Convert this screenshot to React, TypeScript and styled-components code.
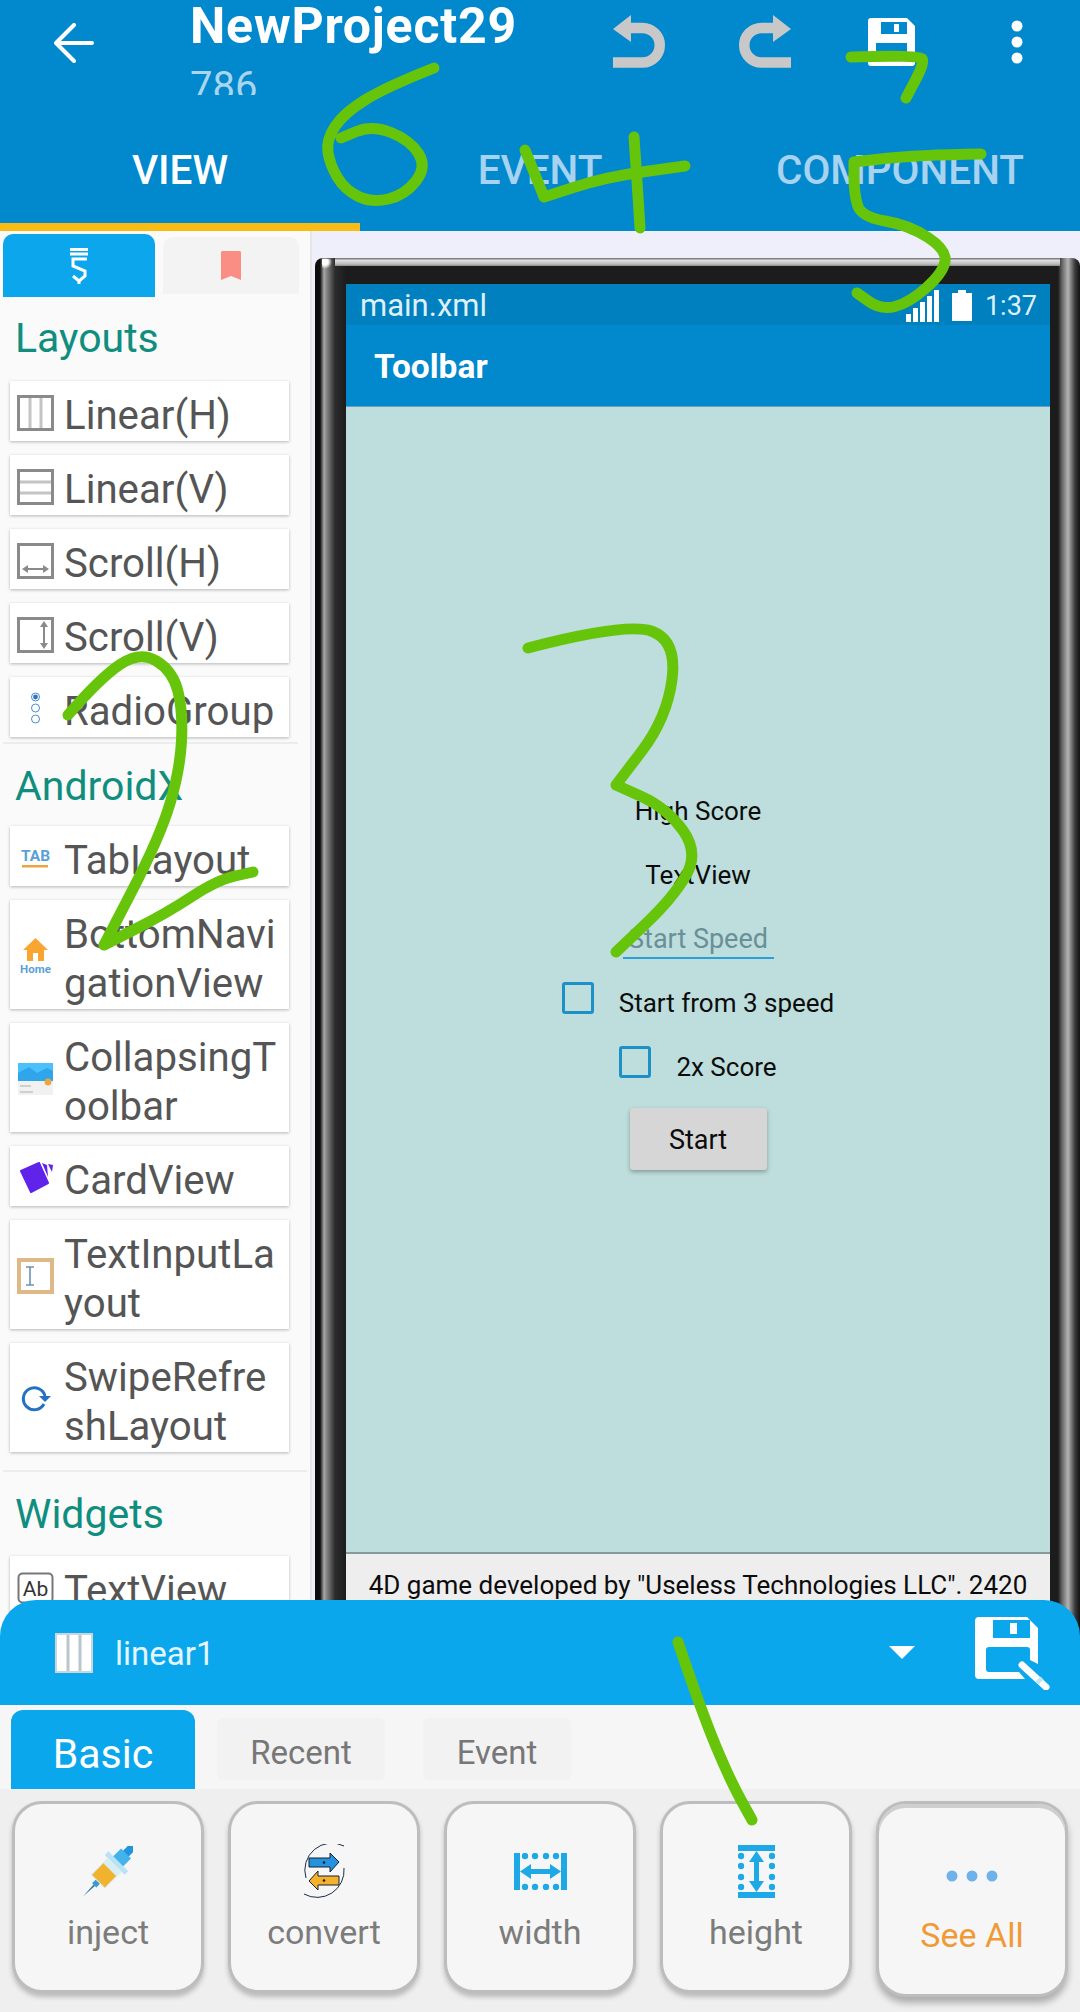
import styled, { createGlobalStyle } from "styled-components";

const GlobalStyle = createGlobalStyle`
    html, body {
        margin: 0;
        padding: 0;
        background: #fafafa;
    }
    * {
        box-sizing: border-box;
    }
`;

const App_ = styled.div`
    position: relative;
    width: 1080px;
    height: 2012px;
    overflow: hidden;
    display: flex;
    flex-direction: column;
    font-family: Roboto, "Liberation Sans", sans-serif;
`;

/* top bar */
const Header = styled.header`
    height: 231px;
    flex: none;
    background: #0288cc;
`;
const HeaderTop = styled.div`
    height: 95px;
    display: flex;
    align-items: flex-start;
`;
const BackSlot = styled.div`
    width: 190px;
    height: 86px;
    flex: none;
    display: flex;
    align-items: center;
    padding-left: 54px;
`;
const TitleBlock = styled.div`
    flex: 1;
`;
const ProjectName = styled.div`
    font-size: 50px;
    font-weight: 700;
    letter-spacing: 0.8px;
    line-height: 52px;
    color: #fff;
`;
const ProjectId = styled.div`
    height: 43px;
    overflow: hidden;
    font-size: 40px;
    line-height: 70px;
    color: #a9d5ef;
`;
const Actions = styled.div`
    width: 504px;
    flex: none;
    display: grid;
    grid-template-columns: repeat(4, 1fr);
`;
const ActionSlot = styled.div`
    height: 83px;
    display: flex;
    align-items: center;
    justify-content: center;
`;
const TabRow = styled.div`
    display: flex;
`;
const TopTab = styled.div<{ $active?: boolean }>`
    flex: 1;
    height: 136px;
    padding-top: 22px;
    display: flex;
    align-items: center;
    justify-content: center;
    font-size: 40.5px;
    font-weight: 500;
    color: ${(props) => (props.$active ? "#ffffff" : "#a7d2f0")};
    border-bottom: 8px solid ${(props) => (props.$active ? "#f9bc15" : "transparent")};
`;

/* palette + preview */
const Main = styled.div`
    flex: 1;
    min-height: 0;
    display: flex;
    overflow: hidden;
`;
const Palette = styled.aside`
    width: 312px;
    flex: none;
    background: #fafafa;
    border-right: 2px solid #e6e6e6;
`;
const PaletteTabs = styled.div`
    display: flex;
    gap: 8px;
    padding: 3px 0 0 3px;
    align-items: flex-start;
`;
const PaletteTab = styled.div<{ $active?: boolean }>`
    width: ${(props) => (props.$active ? "152px" : "136px")};
    height: ${(props) => (props.$active ? "63px" : "57px")};
    margin-top: ${(props) => (props.$active ? "0" : "3px")};
    background: ${(props) => (props.$active ? "#0ba6ec" : "#f3f3f3")};
    border-radius: 10px 10px 0 0;
    display: flex;
    align-items: center;
    justify-content: center;
`;
const SectionTitle = styled.div<{ $top: number; $bottom: number }>`
    margin: ${(props) => props.$top}px 0 ${(props) => props.$bottom}px 15px;
    font-size: 41px;
    line-height: 48px;
    color: #0f8e80;
`;
const ItemList = styled.div`
    display: flex;
    flex-direction: column;
    gap: 14px;
    padding-left: 10px;
`;
const Item = styled.div`
    width: 279px;
    min-height: 60px;
    padding: 4px 0 1px 7px;
    display: flex;
    align-items: center;
    gap: 10px;
    background: #fff;
    box-shadow: 0 1px 3px rgba(0, 0, 0, 0.28);
`;
const ItemIcon = styled.div`
    width: 37px;
    flex: none;
    display: flex;
    justify-content: center;
`;
const ItemLabel = styled.div`
    padding-top: 6px;
    font-size: 40.2px;
    line-height: 49px;
    white-space: pre-line;
    color: #555;
`;
const Divider = styled.div<{ $wide?: boolean }>`
    height: 2px;
    margin: ${(props) => (props.$wide ? "18px 3px 0 3px" : "5px 12px 0 3px")};
    background: #ececec;
`;

const Canvas = styled.section`
    flex: 1;
    min-width: 0;
    background: #efeffb;
    padding: 27px 0 0 3px;
`;
const PhoneFrame = styled.div`
    height: 100%;
    padding: 26px 30px 0 31px;
    border-radius: 8px 8px 0 0;
    background-color: #1c1c1c;
    background-repeat: no-repeat;
    background-image:
        radial-gradient(circle at 3px 3px, #fff 0, #fff 3px, transparent 7px),
        linear-gradient(#666, #dedede 30%, #bcbcbc 75%, #8a8a8a),
        linear-gradient(90deg, #0c0c0c 0, #0c0c0c 5px, #a8a8a8 9px, #8c8c8c 11px, #2c2c2c 20px, #1c1c1c 31px),
        linear-gradient(90deg, #1c1c1c 0, #1c1c1c 8px, #666 12px, #b4b4b4 18px, #3a3a3a 25px, #111 30px);
    background-size: 14px 14px, calc(100% - 40px) 8px, 31px 100%, 30px 100%;
    background-position: 7px 1px, 20px 0, 0 0, right 0 top 0;
`;
const Screen = styled.div`
    width: 704px;
    height: 100%;
    display: flex;
    flex-direction: column;
`;
const StatusBar = styled.div`
    height: 41px;
    flex: none;
    padding: 2px 13px 0 14px;
    display: flex;
    align-items: center;
    background: #0080be;
    color: #dff0f9;
    font-size: 31px;
`;
const FileName = styled.div`
    flex: 1;
`;
const StatusIcons = styled.div`
    display: flex;
    align-items: center;
    gap: 13px;
`;
const StatusClock = styled.span`
    font-size: 27px;
`;
const PreviewToolbar = styled.div`
    height: 82px;
    flex: none;
    padding: 2px 0 0 28px;
    display: flex;
    align-items: center;
    background: #0288cc;
    border-bottom: 1px solid #6f9fb4;
    color: #fff;
    font-size: 33.5px;
    font-weight: 700;
`;
const PreviewBody = styled.div`
    height: 1145px;
    flex: none;
    padding-top: 372px;
    display: flex;
    flex-direction: column;
    align-items: center;
    background: #bddedc;
    color: #0c0c0c;
    font-size: 26px;
`;
const PreviewRow = styled.div`
    height: 64px;
    display: flex;
    align-items: center;
    justify-content: center;
    gap: 25px;
`;
const HintInput = styled.div`
    width: 151px;
    height: 36px;
    margin-top: 3px;
    line-height: 32px;
    font-size: 27px;
    white-space: nowrap;
    text-align: center;
    color: #6a8f99;
    border-bottom: 2px solid #2a9fd6;
`;
const CheckBox = styled.div`
    width: 32px;
    height: 32px;
    margin-bottom: 10px;
    border: 3px solid #1e90c8;
    border-radius: 3px;
`;
const PreviewButton = styled.div`
    width: 137px;
    height: 62px;
    margin-top: 9px;
    padding-top: 1px;
    display: flex;
    align-items: center;
    justify-content: center;
    background: #d6d6d6;
    border-radius: 3px;
    box-shadow: 0 2px 4px rgba(0, 0, 0, 0.3);
    font-size: 27px;
`;
const ScreenFooter = styled.div`
    flex: 1;
    padding-top: 15px;
    text-align: center;
    white-space: nowrap;
    background: #eeeeee;
    border-top: 2px solid #8a9a9c;
    color: #0c0c0c;
    font-size: 26px;
    line-height: 32px;
`;

/* bottom sheet */
const Sheet = styled.div`
    position: relative;
    height: 412px;
    flex: none;
    margin-top: -40px;
    display: flex;
    flex-direction: column;
`;
const SheetBar = styled.div`
    height: 105px;
    flex: none;
    padding: 0 30px 0 55px;
    display: flex;
    align-items: center;
    background: #0ba7ec;
    border-radius: 36px 36px 0 0;
`;
const WidgetName = styled.div`
    flex: 1;
    margin: 2px 0 0 22px;
    font-size: 33px;
    color: #e4f5fd;
`;
const Caret = styled.div`
    width: 0;
    height: 0;
    margin: 0 60px 0 0;
    border-left: 13px solid transparent;
    border-right: 13px solid transparent;
    border-top: 13px solid #fff;
`;
const SheetTabs = styled.div`
    height: 84px;
    flex: none;
    padding: 5px 0 0 11px;
    display: flex;
    align-items: flex-start;
    background: #f6f6f6;
`;
const BasicTab = styled.div`
    width: 184px;
    height: 79px;
    padding-top: 9px;
    margin-right: 22px;
    display: flex;
    align-items: center;
    justify-content: center;
    background: #0ba7ec;
    border-radius: 12px 12px 0 0;
    color: #fff;
    font-size: 41px;
`;
const SheetTab = styled.div<{ $width: number }>`
    width: ${(props) => props.$width}px;
    height: 62px;
    padding-top: 7px;
    margin: 8px 38px 0 0;
    display: flex;
    align-items: center;
    justify-content: center;
    background: #f2f2f2;
    border-radius: 6px;
    color: #777;
    font-size: 33px;
`;
const ToolGrid = styled.div`
    flex: 1;
    padding: 12px 12px 0 12px;
    display: grid;
    grid-template-columns: repeat(5, 192px);
    column-gap: 24px;
    align-content: start;
    background: #efefef;
`;
const ToolButton = styled.div`
    height: 192px;
    padding-top: 37px;
    display: flex;
    flex-direction: column;
    align-items: center;
    background: #f6f6f6;
    border: 3px solid #bdbdbd;
    border-radius: 30px;
    box-shadow: 0 4px 5px rgba(0, 0, 0, 0.22);
`;
const SeeAllButton = styled(ToolButton)`
    height: 196px;
    padding-top: 42px;
    box-shadow: inset 0 4px 0 #cfcfcf, 0 6px 7px rgba(0, 0, 0, 0.28);
`;
const ToolIcon = styled.div`
    height: 60px;
    display: flex;
    align-items: center;
`;
const ToolLabel = styled.div<{ $accent?: boolean }>`
    margin-top: ${(props) => (props.$accent ? "9px" : "11px")};
    font-size: 34px;
    line-height: 40px;
    color: ${(props) => (props.$accent ? "#f09a37" : "#7c7c7c")};
`;

/* handwriting on top of the screenshot */
const Scribble = styled.svg`
    position: absolute;
    left: 0;
    top: 0;
    width: 1080px;
    height: 2012px;
    pointer-events: none;
`;

type Pt = [number, number];

const smooth = (pts: Pt[]) => {
    let d = `M${pts[0][0]} ${pts[0][1]}`;
    for (let i = 1; i < pts.length - 1; i++) {
        const mx = (pts[i][0] + pts[i + 1][0]) / 2;
        const my = (pts[i][1] + pts[i + 1][1]) / 2;
        d += ` Q${pts[i][0]} ${pts[i][1]} ${mx} ${my}`;
    }
    const last = pts[pts.length - 1];
    return d + ` L${last[0]} ${last[1]}`;
};

// doubled points are the sharp corners of the handwriting
const strokes: Pt[][] = [
    [[434, 68], [386, 87], [344, 113], [326, 140], [330, 165], [345, 190], [372, 203], [405, 195], [427, 167], [410, 140], [372, 125], [341, 138]],
    [[525, 150], [544, 197], [544, 197], [606, 177], [685, 166]],
    [[634, 137], [637, 180], [640, 228]],
    [[981, 154], [916, 155], [854, 162], [854, 162], [854, 193], [861, 217], [909, 225], [947, 250], [943, 273], [909, 303], [881, 310], [857, 293]],
    [[851, 57], [919, 55], [925, 62], [906, 98]],
    [[528, 648], [628, 622], [677, 641], [667, 718], [616, 785], [616, 785], [667, 808], [699, 853], [673, 898], [616, 952]],
    [[68, 715], [100, 678], [140, 651], [173, 671], [183, 712], [180, 770], [160, 837], [104, 945], [104, 945], [167, 913], [217, 880], [253, 872]],
    [[678, 1642], [702, 1713], [730, 1780], [752, 1820]],
];

const Dot = ({ cx, cy, r = 3.2, fill = "#1da9e6" }: { cx: number; cy: number; r?: number; fill?: string }) => (
    <circle cx={cx} cy={cy} r={r} fill={fill} />
);

const ICON_GRAY = "#8a8a8a";

function PaletteIcon({ name }: { name: string }) {
    switch (name) {
        case "linearH":
            return (
                <svg width="37" height="36" viewBox="0 0 37 36">
                    <rect x="1.5" y="1.5" width="34" height="33" fill="#fff" stroke={ICON_GRAY} strokeWidth="3" />
                    <path d="M13 3V33M24 3V33" stroke="#c4c4c4" strokeWidth="3" />
                </svg>
            );
        case "linearV":
            return (
                <svg width="37" height="36" viewBox="0 0 37 36">
                    <rect x="1.5" y="1.5" width="34" height="33" fill="#fff" stroke={ICON_GRAY} strokeWidth="3" />
                    <path d="M3 13H34M3 24H34" stroke="#c4c4c4" strokeWidth="3" />
                </svg>
            );
        case "scrollH":
            return (
                <svg width="37" height="36" viewBox="0 0 37 36">
                    <rect x="1.5" y="1.5" width="34" height="33" fill="#fff" stroke={ICON_GRAY} strokeWidth="3" />
                    <path d="M9 26H28" stroke={ICON_GRAY} strokeWidth="2" />
                    <path d="M5 26L11 22V30ZM32 26L26 22V30Z" fill={ICON_GRAY} />
                </svg>
            );
        case "scrollV":
            return (
                <svg width="37" height="36" viewBox="0 0 37 36">
                    <rect x="1.5" y="1.5" width="34" height="33" fill="#fff" stroke={ICON_GRAY} strokeWidth="3" />
                    <path d="M27 9V27" stroke={ICON_GRAY} strokeWidth="2" />
                    <path d="M27 4L23 10H31ZM27 32L23 26H31Z" fill={ICON_GRAY} />
                </svg>
            );
        case "radio":
            return (
                <svg width="37" height="36" viewBox="0 0 37 36">
                    <circle cx="18.5" cy="6" r="4" fill="none" stroke="#4a8ccf" strokeWidth="1" />
                    <circle cx="18.5" cy="6" r="2.4" fill="#2f74c4" />
                    <circle cx="18.5" cy="17" r="4" fill="none" stroke="#4a8ccf" strokeWidth="1" />
                    <circle cx="18.5" cy="28" r="4" fill="none" stroke="#4a8ccf" strokeWidth="1" />
                </svg>
            );
        case "tab":
            return (
                <svg width="37" height="24" viewBox="0 0 37 24">
                    <text x="18.5" y="15" textAnchor="middle" fontFamily="Roboto, sans-serif" fontSize="15.5" fontWeight="700" fill="#5b9fd8">TAB</text>
                    <rect x="5" y="19" width="26" height="2.5" fill="#eda544" />
                </svg>
            );
        case "home":
            return (
                <svg width="37" height="38" viewBox="0 0 37 38">
                    <path d="M18.5 1L31 13H27V24H21V16H16V24H10V13H6Z" fill="#f9a532" />
                    <text x="18.5" y="36" textAnchor="middle" fontFamily="Roboto, sans-serif" fontSize="11.5" fontWeight="700" fill="#5b9fd8">Home</text>
                </svg>
            );
        case "collapsing":
            return (
                <svg width="37" height="32" viewBox="0 0 37 32">
                    <rect x="1" y="0" width="35" height="32" fill="#f1f1f1" />
                    <rect x="1" y="0" width="35" height="18" fill="#2fa6ec" />
                    <path d="M1 10L12 4L20 10L30 5L36 8V0H1Z" fill="#4cc0fb" />
                    <circle cx="31" cy="19" r="3.4" fill="#eda544" />
                    <path d="M3 23H14M3 29H16" stroke="#c4c4c4" strokeWidth="1.4" />
                </svg>
            );
        case "card":
            return (
                <svg width="37" height="32" viewBox="0 0 37 32">
                    <path d="M4 9L22 1L31 21L14 30Z" fill="#5f23ea" stroke="#5f23ea" strokeWidth="2" strokeLinejoin="round" />
                    <path d="M25 1L31 15L30 3ZM31 2L35 10L36 3Z" fill="#5f23ea" />
                </svg>
            );
        case "input":
            return (
                <svg width="37" height="36" viewBox="0 0 37 36">
                    <rect x="2" y="2" width="33" height="32" fill="#fff" stroke="#deb887" strokeWidth="4" />
                    <path d="M9 9H17M13 9V27M9 27H17" stroke="#6b93b5" strokeWidth="1.6" fill="none" />
                </svg>
            );
        case "swipe":
            return (
                <svg width="37" height="28" viewBox="0 0 37 28">
                    <path d="M27 19A11 11 0 1 1 28 11" fill="none" stroke="#2272c3" strokeWidth="3" />
                    <path d="M22 11H34L28 17Z" fill="#2272c3" />
                </svg>
            );
        default:
            return (
                <svg width="37" height="32" viewBox="0 0 37 32">
                    <rect x="1.5" y="1.5" width="34" height="29" rx="4" fill="#fff" stroke="#777" strokeWidth="2" />
                    <text x="18.5" y="24" textAnchor="middle" fontFamily="Roboto, sans-serif" fontSize="21" fill="#333">Ab</text>
                </svg>
            );
    }
}

const layoutItems = [
    { icon: "linearH", label: "Linear(H)" },
    { icon: "linearV", label: "Linear(V)" },
    { icon: "scrollH", label: "Scroll(H)" },
    { icon: "scrollV", label: "Scroll(V)" },
    { icon: "radio", label: "RadioGroup" },
];
const androidxItems = [
    { icon: "tab", label: "TabLayout" },
    { icon: "home", label: "BottomNavi\ngationView" },
    { icon: "collapsing", label: "CollapsingT\noolbar" },
    { icon: "card", label: "CardView" },
    { icon: "input", label: "TextInputLa\nyout" },
    { icon: "swipe", label: "SwipeRefre\nshLayout" },
];

const Items = ({ items }: { items: { icon: string; label: string }[] }) => (
    <ItemList>
        {items.map((item) => (
            <Item key={item.label}>
                <ItemIcon>
                    <PaletteIcon name={item.icon} />
                </ItemIcon>
                <ItemLabel>{item.label}</ItemLabel>
            </Item>
        ))}
    </ItemList>
);

const UndoIcon = ({ flip }: { flip?: boolean }) => (
    <svg width="52" height="53" viewBox="0 0 52 53">
        <g transform={flip ? "translate(52 0) scale(-1 1)" : undefined} fill="#c8c8c8">
            <path d="M15 13H29.5A17.25 17.25 0 0 1 29.5 47.5H0" fill="none" stroke="#c8c8c8" strokeWidth="10.5" />
            <path d="M0 14L18 0V27Z" />
        </g>
    </svg>
);

const SignalBars = () => (
    <svg width="33" height="32" viewBox="0 0 33 32">
        <path d="M0 24H5V32H0ZM7 18H12V32H7ZM14 12H19V32H14ZM21 6H26V32H21ZM28 0H33V32H28Z" fill="#fff" />
    </svg>
);

const Battery = () => (
    <svg width="20" height="31" viewBox="0 0 20 31">
        <path d="M6 0H14V3H20V31H0V3H6Z" fill="#fff" />
    </svg>
);

export default function App() {
    return (
        <App_>
            <GlobalStyle />
            <Header>
                <HeaderTop>
                    <BackSlot>
                        <svg width="40" height="40" viewBox="0 0 40 40" fill="none" stroke="#fff" strokeWidth="4" strokeLinecap="round" strokeLinejoin="round">
                            <path d="M38 20H3M20 2L2 20L20 38" />
                        </svg>
                    </BackSlot>
                    <TitleBlock>
                        <ProjectName>NewProject29</ProjectName>
                        <ProjectId>786</ProjectId>
                    </TitleBlock>
                    <Actions>
                        <ActionSlot>
                            <UndoIcon />
                        </ActionSlot>
                        <ActionSlot>
                            <UndoIcon flip />
                        </ActionSlot>
                        <ActionSlot>
                            <svg width="47" height="48" viewBox="0 0 47 48">
                                <path
                                    fillRule="evenodd"
                                    fill="#fff"
                                    d="M3 0H39L47 8V45A3 3 0 0 1 44 48H3A3 3 0 0 1 0 45V3A3 3 0 0 1 3 0ZM13 4V16H39V4ZM26 6H31V14H26ZM8 25V42H39V25Z"
                                />
                            </svg>
                        </ActionSlot>
                        <ActionSlot>
                            <svg width="12" height="44" viewBox="0 0 12 44" fill="#fff">
                                <circle cx="6" cy="6" r="5.5" />
                                <circle cx="6" cy="22" r="5.5" />
                                <circle cx="6" cy="38" r="5.5" />
                            </svg>
                        </ActionSlot>
                    </Actions>
                </HeaderTop>
                <TabRow>
                    <TopTab $active>VIEW</TopTab>
                    <TopTab>EVENT</TopTab>
                    <TopTab>COMPONENT</TopTab>
                </TabRow>
            </Header>

            <Main>
                <Palette>
                    <PaletteTabs>
                        <PaletteTab $active>
                            <svg width="20" height="36" viewBox="0 0 20 36" fill="none" stroke="#fff" strokeWidth="3">
                                <path d="M1 1.5H19M1 6H19" />
                                <path d="M18 11H4V18L16 23V28L10 33L4 28" />
                                <path d="M10 32V36" />
                            </svg>
                        </PaletteTab>
                        <PaletteTab>
                            <svg width="20" height="29" viewBox="0 0 20 29">
                                <path d="M1 0H19L20 1V29L10 25L0 29V1Z" fill="#fa8e85" />
                            </svg>
                        </PaletteTab>
                    </PaletteTabs>
                    <SectionTitle $top={17} $bottom={19}>Layouts</SectionTitle>
                    <Items items={layoutItems} />
                    <Divider />
                    <SectionTitle $top={18} $bottom={16}>AndroidX</SectionTitle>
                    <Items items={androidxItems} />
                    <Divider $wide />
                    <SectionTitle $top={18} $bottom={18}>Widgets</SectionTitle>
                    <Items items={[{ icon: "ab", label: "TextView" }]} />
                </Palette>

                <Canvas>
                    <PhoneFrame>
                        <Screen>
                            <StatusBar>
                                <FileName>main.xml</FileName>
                                <StatusIcons>
                                    <SignalBars />
                                    <Battery />
                                    <StatusClock>1:37</StatusClock>
                                </StatusIcons>
                            </StatusBar>
                            <PreviewToolbar>Toolbar</PreviewToolbar>
                            <PreviewBody>
                                <PreviewRow>High Score</PreviewRow>
                                <PreviewRow>TextView</PreviewRow>
                                <PreviewRow>
                                    <HintInput>Start Speed</HintInput>
                                </PreviewRow>
                                <PreviewRow>
                                    <CheckBox />
                                    Start from 3 speed
                                </PreviewRow>
                                <PreviewRow>
                                    <CheckBox />
                                    2x Score
                                </PreviewRow>
                                <PreviewButton>Start</PreviewButton>
                            </PreviewBody>
                            <ScreenFooter>4D game developed by "Useless Technologies LLC". 2420</ScreenFooter>
                        </Screen>
                    </PhoneFrame>
                </Canvas>
            </Main>

            <Sheet>
                <SheetBar>
                    <svg width="38" height="40" viewBox="0 0 38 40">
                        <rect x="1" y="1" width="36" height="38" fill="#fff" stroke="#c9d6dc" strokeWidth="2" />
                        <path d="M13 2V38M25 2V38" stroke="#b9c6cc" strokeWidth="3" />
                    </svg>
                    <WidgetName>linear1</WidgetName>
                    <Caret />
                    <svg width="75" height="74" viewBox="0 0 75 74">
                        <path
                            fillRule="evenodd"
                            fill="#fff"
                            d="M4 1H52L63 12V48L55 44V34A3 3 0 0 0 52 31H14A3 3 0 0 0 11 34V53A3 3 0 0 0 14 56H44L50 63H4A4 4 0 0 1 0 59V5A4 4 0 0 1 4 1ZM18 4V22H55V4ZM35 7H42V18H35Z"
                        />
                        <path d="M47 49L71 71" stroke="#fff" strokeWidth="7" strokeLinecap="round" />
                        <path d="M63 63L66 66" stroke="#bfe6f9" strokeWidth="7" />
                    </svg>
                </SheetBar>
                <SheetTabs>
                    <BasicTab>Basic</BasicTab>
                    <SheetTab $width={168}>Recent</SheetTab>
                    <SheetTab $width={148}>Event</SheetTab>
                </SheetTabs>
                <ToolGrid>
                    <ToolButton>
                        <ToolIcon>
                            <svg width="50" height="51" viewBox="0 0 50 51">
                                <g transform="rotate(45 25 25.5)">
                                    <rect x="21" y="-8" width="8" height="9" fill="#2095dd" />
                                    <rect x="15" y="-10" width="20" height="4" rx="1" fill="#2095dd" />
                                    <rect x="18" y="0" width="14" height="12" fill="#43b3ec" />
                                    <rect x="11" y="11" width="28" height="5" fill="#b9e2f5" />
                                    <rect x="15" y="16" width="20" height="24" fill="#d7eef3" />
                                    <rect x="16" y="23" width="18" height="16" fill="#f1b32e" />
                                    <rect x="22" y="40" width="6" height="5" fill="#3a9ad0" />
                                    <path d="M24 45H26L25 62Z" fill="#3a7fa8" />
                                </g>
                            </svg>
                        </ToolIcon>
                        <ToolLabel>inject</ToolLabel>
                    </ToolButton>
                    <ToolButton>
                        <ToolIcon>
                            <svg width="42" height="54" viewBox="0 0 42 54">
                                <path d="M41 2A27 27 0 0 0 3 34M1 50A27 27 0 0 0 41 24" fill="none" stroke="#1c2a4a" strokeWidth="1" />
                                <path d="M6 14H27V9L36 18L27 28V23H6Z" fill="#2592dd" stroke="#123" strokeWidth="1" />
                                <path d="M36 32H15V27L6 37L15 46V41H36Z" fill="#f5b12b" stroke="#123" strokeWidth="1" />
                                <circle cx="21" cy="18.5" r="1.3" fill="#123" />
                                <circle cx="21" cy="36.5" r="1.3" fill="#123" />
                            </svg>
                        </ToolIcon>
                        <ToolLabel>convert</ToolLabel>
                    </ToolButton>
                    <ToolButton>
                        <ToolIcon>
                            <svg width="53" height="37" viewBox="0 0 53 37">
                                <path d="M0 0H6V37H0ZM47 0H53V37H47Z" fill="#1da9e6" />
                                <path d="M6 18.5L17 11V16H36V11L47 18.5L36 26V21H17V26Z" fill="#1da9e6" />
                                <Dot cx={11} cy={3} />
                                <Dot cx={21} cy={3} />
                                <Dot cx={32} cy={3} />
                                <Dot cx={42} cy={3} />
                                <Dot cx={11} cy={34} />
                                <Dot cx={21} cy={34} />
                                <Dot cx={32} cy={34} />
                                <Dot cx={42} cy={34} />
                            </svg>
                        </ToolIcon>
                        <ToolLabel>width</ToolLabel>
                    </ToolButton>
                    <ToolButton>
                        <ToolIcon>
                            <svg width="37" height="53" viewBox="0 0 37 53">
                                <path d="M0 0H37V6H0ZM0 47H37V53H0Z" fill="#1da9e6" />
                                <path d="M18.5 6L26 17H21V36H26L18.5 47L11 36H16V17H11Z" fill="#1da9e6" />
                                <Dot cx={3} cy={11} />
                                <Dot cx={3} cy={21} />
                                <Dot cx={3} cy={32} />
                                <Dot cx={3} cy={42} />
                                <Dot cx={34} cy={11} />
                                <Dot cx={34} cy={21} />
                                <Dot cx={34} cy={32} />
                                <Dot cx={34} cy={42} />
                            </svg>
                        </ToolIcon>
                        <ToolLabel>height</ToolLabel>
                    </ToolButton>
                    <SeeAllButton>
                        <ToolIcon>
                            <svg width="52" height="14" viewBox="0 0 52 14" fill="#6fb1ea">
                                <circle cx="6" cy="7" r="5.5" />
                                <circle cx="26" cy="7" r="5.5" />
                                <circle cx="46" cy="7" r="5.5" />
                            </svg>
                        </ToolIcon>
                        <ToolLabel $accent>See All</ToolLabel>
                    </SeeAllButton>
                </ToolGrid>
            </Sheet>

            <Scribble viewBox="0 0 1080 2012" fill="none" stroke="#66c50a" strokeWidth="11" strokeLinecap="round" strokeLinejoin="round">
                {strokes.map((pts, i) => (
                    <path key={i} d={smooth(pts)} />
                ))}
            </Scribble>
        </App_>
    );
}
